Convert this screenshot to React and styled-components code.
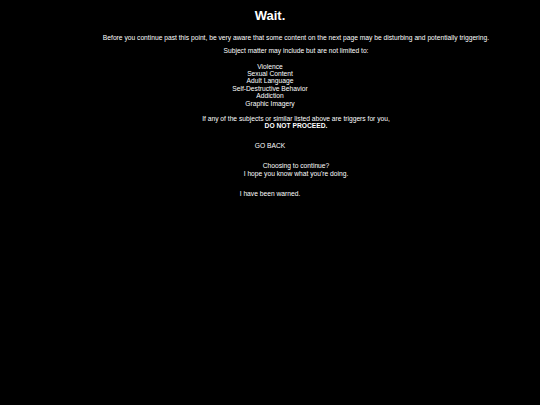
import React from 'react';
import styled, { createGlobalStyle } from 'styled-components';

const Global = createGlobalStyle`
  html, body {
    margin: 0;
    padding: 0;
    background: #000;
  }
  body {
    font-family: 'Liberation Sans', Arial, sans-serif;
    color: #fff;
  }
`;

const Page = styled.div`
  min-height: 405px;
  padding-top: 8px;
  background: #000;
  text-align: center;
  font-size: 6.7px;
  line-height: 7.5px;
`;

const Title = styled.h1`
  margin: 0;
  font-size: 13px;
  line-height: 16px;
  font-weight: bold;
`;

// paragraphs sit a bit right of the centre line in the original
const Text = styled.p`
  margin: ${(props) => props.gap || 0}px 0 0;
  padding-left: 52px;
  font-weight: ${(props) => (props.strong ? 'bold' : 'normal')};
`;

const List = styled.ul`
  list-style: none;
  margin: 8.5px 0 0;
  padding: 0;
  line-height: 7.4px;
`;

const Back = styled.a`
  display: block;
  margin-top: 12.5px;
  color: #fff;
  text-decoration: none;
  cursor: pointer;
`;

const subjects = [
  'Violence',
  'Sexual Content',
  'Adult Language',
  'Self-Destructive Behavior',
  'Addiction',
  'Graphic Imagery',
];

export default function App() {
  return (
    <Page>
      <Global />
      <Title>Wait.</Title>
      <Text gap={9.5}>
        Before you continue past this point, be very aware that some content on the next page may be disturbing and potentially triggering.
      </Text>
      <Text gap={5.5}>Subject matter may include but are not limited to:</Text>
      <List>
        {subjects.map((s) => (
          <li key={s}>{s}</li>
        ))}
      </List>
      <Text gap={7.6}>If any of the subjects or similar listed above are triggers for you,</Text>
      <Text strong>DO NOT PROCEED.</Text>
      <Back>GO BACK</Back>
      <Text gap={12.5}>
        Choosing to continue?
        <br />
        I hope you know what you're doing.
      </Text>
      <Back>I have been warned.</Back>
    </Page>
  );
}
